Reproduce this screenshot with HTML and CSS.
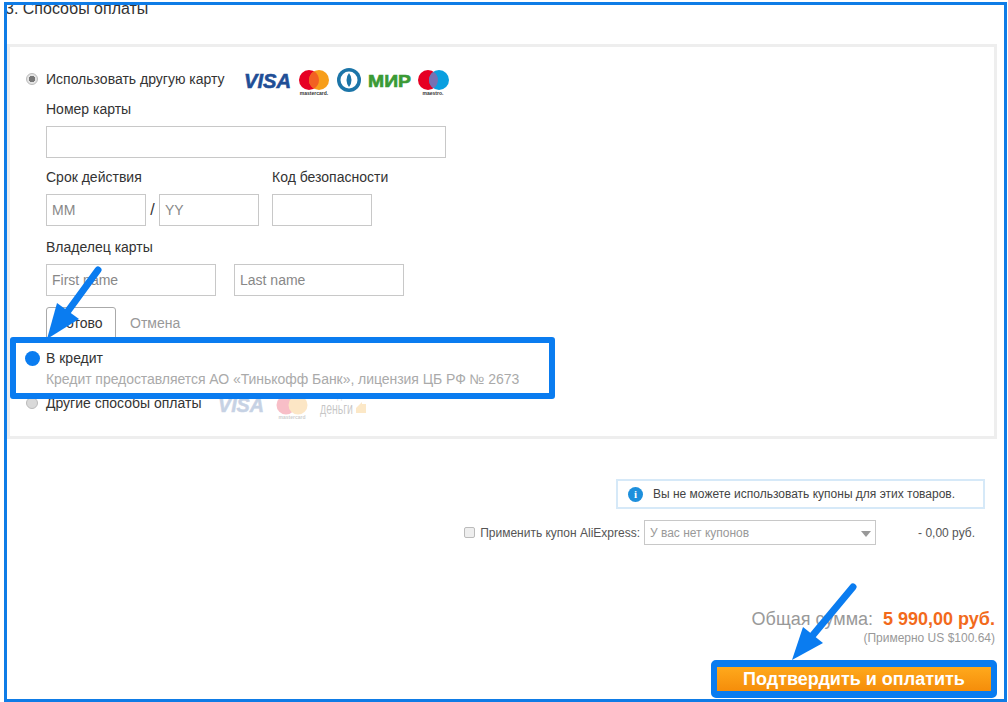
FILE: index.html
```html
<!DOCTYPE html>
<html lang="ru">
<head>
<meta charset="utf-8">
<title>Способы оплаты</title>
<link rel="stylesheet" href="styles.css">
</head>
<body>
<div class="frame">
  <h2 class="heading">3. Способы оплаты</h2>
  <section class="panel">
    <div class="option-row">
      <span class="radio radio-on"></span>
      <span class="option-label">Использовать другую карту</span>
      <svg class="logos" width="210" height="32" viewBox="0 0 210 32">
        <text x="1" y="20" class="visa" fill="#1f4e96" textLength="47" lengthAdjust="spacingAndGlyphs">VISA</text>
        <circle cx="66" cy="12" r="10" fill="#e60023"/><circle cx="76" cy="12" r="10" fill="#f79e1b"/>
        <path d="M71 3.340a10 10 0 0 1 0 17.320a10 10 0 0 1 0-17.320z" fill="#f26122"/>
        <text x="71" y="27" class="micro" text-anchor="middle">mastercard.</text>
        <circle cx="106" cy="12" r="12" fill="#1c75a8"/><circle cx="106" cy="12" r="8.500" fill="#fff"/>
        <path d="M106 5a11 11 0 0 1 0 14a11 11 0 0 1 0-14z" fill="#1c75a8"/>
        <text x="125" y="19" class="mir" fill="#3b9a35" textLength="43" lengthAdjust="spacingAndGlyphs">МИР</text>
        <circle cx="185" cy="12" r="10" fill="#e60023"/><circle cx="196" cy="12" r="10" fill="#0a9fe0"/>
        <path d="M190.500 3.650a10 10 0 0 1 0 16.700a10 10 0 0 1 0-16.700z" fill="#7671b3"/>
        <text x="190" y="27" class="micro" text-anchor="middle">maestro.</text>
      </svg>
    </div>
    <div class="fields">
      <label class="field-label">Номер карты</label>
      <div class="input input-card"></div>
      <div class="field-row gap-card">
        <div class="field-col col-expiry">
          <label class="field-label">Срок действия</label>
          <div class="expiry">
            <div class="input input-short ph">MM</div>
            <span class="slash">/</span>
            <div class="input input-short ph">YY</div>
          </div>
        </div>
        <div class="field-col">
          <label class="field-label">Код безопасности</label>
          <div class="input input-short"></div>
        </div>
      </div>
      <label class="field-label owner">Владелец карты</label>
      <div class="names">
        <div class="input input-name ph">First name</div>
        <div class="input input-name ph">Last name</div>
      </div>
      <div class="actions">
        <button class="btn-done">Готово</button>
        <span class="cancel">Отмена</span>
      </div>
    </div>
    <div class="credit">
      <span class="radio-credit"></span>
      <div>
        <div class="credit-title">В кредит</div>
        <div class="credit-note">Кредит предоставляется АО «Тинькофф Банк», лицензия ЦБ РФ № 2673</div>
      </div>
    </div>
    <div class="option-row other">
      <span class="radio"></span>
      <span class="option-label">Другие способы оплаты</span>
      <svg class="logos-dim" width="160" height="30" viewBox="0 0 160 30">
        <text x="1" y="21" class="visa" fill="#1f4e96" textLength="46" lengthAdjust="spacingAndGlyphs">VISA</text>
        <circle cx="69" cy="14" r="9.500" fill="#e60023"/><circle cx="81" cy="14" r="9.500" fill="#f79e1b"/>
        <text x="75" y="28" class="micro" text-anchor="middle">mastercard</text>
        <text x="110" y="8" class="tiny">Яндекс</text>
        <text x="103" y="23" class="money" textLength="33" lengthAdjust="spacingAndGlyphs">деньги</text>
        <path d="M139 17l6-6v2h4v9h-10z" fill="#f5a623"/>
      </svg>
    </div>
  </section>
  <div class="summary">
    <div class="notice">
      <span class="notice-icon">i</span>
      <span>Вы не можете использовать купоны для этих товаров.</span>
    </div>
    <div class="coupon">
      <span class="check"></span>
      <span class="coupon-label">Применить купон AliExpress:</span>
      <div class="select"><span>У вас нет купонов</span><i class="caret"></i></div>
      <span class="discount">- 0,00 руб.</span>
    </div>
    <div class="total">
      <span class="total-label">Общая сумма:</span>
      <span class="total-value">5 990,00 руб.</span>
    </div>
    <div class="approx">(Примерно US $100.64)</div>
    <div class="pay-box"><button class="pay">Подтвердить и оплатить</button></div>
  </div>
  <svg class="arrow arrow-one" width="100" height="90" viewBox="0 0 100 90">
    <path d="M58 10L28 51" class="shaft"/>
    <path d="M7 79L17 43L39 59z" fill="#0a7cf0"/>
  </svg>
  <svg class="arrow arrow-two" width="100" height="90" viewBox="0 0 100 90">
    <path d="M73 7L33 55" class="shaft"/>
    <path d="M12 80L23 47L43 63z" fill="#0a7cf0"/>
  </svg>
</div>
</body>
</html>
```
FILE: styles.css
```css
* { box-sizing: border-box; }
html, body { margin: 0; padding: 0; background: #fff; }
body { width: 1008px; height: 702px; overflow: hidden; font-family: "Liberation Sans", Arial, sans-serif; color: #333; }
.frame { position: relative; width: 1003px; height: 700px; margin: 2px 0 0 4px; border: 3px solid #0f7ce6; overflow: hidden; }
.heading { margin: -7px 0 0 -2px; height: 46px; font-size: 16px; line-height: 22px; font-weight: 400; color: #333; }
.panel { width: 990px; height: 395px; border: 3px solid #eee; padding: 23px 0 0 16px; position: relative; }
.option-row { display: flex; align-items: flex-start; height: 30px; }
.radio { width: 12px; height: 12px; margin: 3px 8px 0 0; border-radius: 50%; background: #d9d9d9; border: 1px solid #bbb; flex: none; }
.radio-on { background: radial-gradient(circle, #777 0 3px, #e4e4e4 3.500px); }
.option-label { font-size: 14px; line-height: 18px; color: #333; }
.logos { margin: -2px 0 0 18px; overflow: visible; }
.fields { margin-left: 20px; }
.field-label { display: block; font-size: 14px; line-height: 18px; color: #333; }
.input { height: 32px; border: 1px solid #c8c8c8; background: #fff; font-size: 14px; line-height: 30px; padding-left: 5px; }
.ph { color: #888; }
.input-card { width: 400px; margin-top: 8px; }
.field-row { display: flex; gap: 13px; }
.gap-card { margin-top: 10px; }
.field-col { display: flex; flex-direction: column; gap: 8px; }
.expiry { display: flex; align-items: center; }
.input-short { width: 100px; }
.slash { width: 13px; text-align: center; font-size: 16px; color: #333; }
.owner { margin-top: 12px; }
.names { display: flex; gap: 18px; margin-top: 8px; }
.input-name { width: 170px; }
.actions { display: flex; align-items: center; margin-top: 11px; }
.btn-done { width: 70px; height: 32px; border: 1px solid #aaa; border-radius: 3px 3px 0 0; background: #fff; font: 14px "Liberation Sans", Arial, sans-serif; color: #333; padding: 0; }
.cancel { margin-left: 14px; font-size: 14px; color: #999; }
.credit { position: absolute; left: 0; top: 290px; width: 545px; height: 62px; border: 6px solid #0a7cf0; border-radius: 3px; background: #fff; display: flex; padding: 6px 0 0 9px; gap: 6px; z-index: 1; }
.radio-credit { width: 15px; height: 15px; margin-top: 2px; border-radius: 50%; background: #0a7cf0; flex: none; }
.credit-title { font-size: 14px; line-height: 18px; color: #333; }
.credit-note { font-size: 14px; line-height: 18px; margin-top: 3px; color: #aaa; letter-spacing: -.05px; }
.other { position: absolute; left: 16px; top: 347px; }
.logos-dim { margin: -3px 0 0 16px; opacity: .25; }
.visa { font: italic 700 21px "Liberation Sans", Arial, sans-serif; stroke: currentColor; color: #1f4e96; stroke-width: .6px; }
.mir { font: 700 17px "Liberation Sans", Arial, sans-serif; stroke: #3b9a35; stroke-width: .6px; }
.micro { font: 700 5px "Liberation Sans", Arial, sans-serif; fill: #333; }
.tiny { font: 8px "Liberation Sans", Arial, sans-serif; fill: #666; }
.money { font: 16px "Liberation Sans", Arial, sans-serif; fill: #222; }
.summary { display: flex; flex-direction: column; align-items: flex-end; padding: 40px 8px 0 0; }
.notice { width: 369px; height: 30px; margin-right: 11px; border: 2px solid #d6e9f8; display: flex; align-items: center; gap: 10px; padding-left: 10px; font-size: 12px; color: #444; }
.notice-icon { width: 15px; height: 15px; border-radius: 50%; background: #1d8fdc; color: #fff; font: 700 11px/15px "Liberation Serif", serif; text-align: center; }
.coupon { display: flex; align-items: center; margin: 11px 21px 0 0; height: 25px; font-size: 12px; color: #555; }
.check { width: 11px; height: 11px; border: 1px solid #bbb; border-radius: 2px; background: #eee; margin-right: 5px; }
.coupon-label { margin-right: 4px; }
.select { position: relative; width: 232px; height: 25px; border: 1px solid #c8c8c8; padding-left: 5px; line-height: 24px; color: #999; }
.caret { position: absolute; right: 4px; top: 10px; border: 5px solid transparent; border-top: 6px solid #999; border-bottom: 0; }
.discount { width: 99px; text-align: right; }
.total { display: flex; gap: 10px; align-items: baseline; margin: 64px 1px 0 0; }
.total-label { font-size: 18px; color: #999; }
.total-value { font-size: 18px; font-weight: 700; color: #f26a1b; }
.approx { font-size: 12px; color: #999; margin: 1px 1px 0 0; }
.pay-box { width: 286px; height: 38px; margin: 15px -1px 0 0; border: solid #0a7cf0; border-width: 7px 6px; border-radius: 5px; background: #0a7cf0; }
.pay { display: block; width: 100%; height: 100%; border: 0; background: linear-gradient(#ffa91c, #f58d0a); color: #fff; font: 700 18px "Liberation Sans", Arial, sans-serif; padding: 0; }
.arrow { position: absolute; z-index: 2; }
.shaft { stroke: #0a7cf0; stroke-width: 7; stroke-linecap: round; fill: none; }
.arrow-one { left: 33px; top: 255px; }
.arrow-two { left: 773px; top: 575px; }
```
